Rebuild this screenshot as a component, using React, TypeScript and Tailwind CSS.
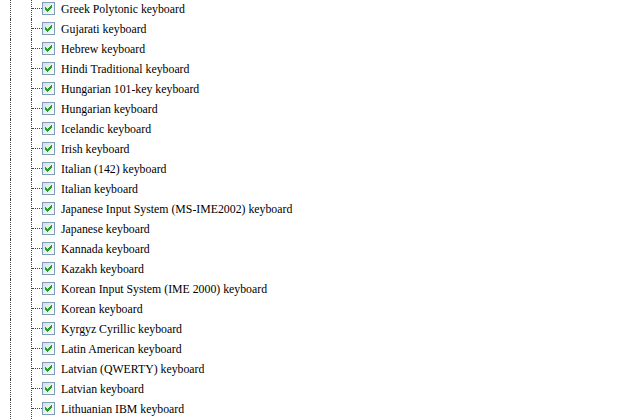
import React from "react";

const layouts = [
  "Greek Polytonic keyboard",
  "Gujarati keyboard",
  "Hebrew keyboard",
  "Hindi Traditional keyboard",
  "Hungarian 101-key keyboard",
  "Hungarian keyboard",
  "Icelandic keyboard",
  "Irish keyboard",
  "Italian (142) keyboard",
  "Italian keyboard",
  "Japanese Input System (MS-IME2002) keyboard",
  "Japanese keyboard",
  "Kannada keyboard",
  "Kazakh keyboard",
  "Korean Input System (IME 2000) keyboard",
  "Korean keyboard",
  "Kyrgyz Cyrillic keyboard",
  "Latin American keyboard",
  "Latvian (QWERTY) keyboard",
  "Latvian keyboard",
  "Lithuanian IBM keyboard",
];

// check mark drawn pixel by pixel, like the XP theme glyph
const checkPixels = [
  "......x",
  ".....xx",
  "x...xxx",
  "xx.xxx.",
  "xxxxx..",
  ".xxx...",
  "..x....",
];

function CheckBox() {
  return (
    <svg width="13" height="13" viewBox="0 0 13 13" shapeRendering="crispEdges" className="shrink-0">
      <defs>
        <linearGradient id="cbFill" x1="0" y1="0" x2="1" y2="1">
          <stop offset="0" stopColor="#d6dde6" />
          <stop offset="1" stopColor="#ffffff" />
        </linearGradient>
      </defs>
      <rect x="0.5" y="0.5" width="12" height="12" fill="url(#cbFill)" stroke="#7f9db9" />
      {checkPixels.map((row, y) =>
        row.split("").map((c, x) =>
          c === "x" ? <rect key={`${x}-${y}`} x={3 + x} y={3 + y} width="1" height="1" fill="#21a121" /> : null,
        ),
      )}
    </svg>
  );
}

function TreeRow({ label }: { label: string }) {
  return (
    <div className="flex h-5 items-stretch">
      <div className="w-[10px] shrink-0" />
      <div className="w-px shrink-0 border-l border-dotted border-[#444]" />
      <div className="w-5 shrink-0" />
      <div className="w-px shrink-0 border-l border-dotted border-[#444]" />
      <div className="flex w-[10px] shrink-0 items-center">
        <div className="mt-[-1px] h-px w-full border-t border-dotted border-[#444]" />
      </div>
      <div className="flex items-center pb-[1px]">
        <CheckBox />
        <span className="ml-[6px] mt-[2px] whitespace-nowrap font-['Liberation_Serif',serif] text-[11.8px] leading-none text-black">
          {label}
        </span>
      </div>
    </div>
  );
}

export default function App() {
  return (
    <div className="h-[420px] w-[622px] overflow-hidden bg-white">
      <div className="-mt-px flex flex-col">
        {layouts.map((l) => (
          <TreeRow key={l} label={l} />
        ))}
      </div>
    </div>
  );
}
